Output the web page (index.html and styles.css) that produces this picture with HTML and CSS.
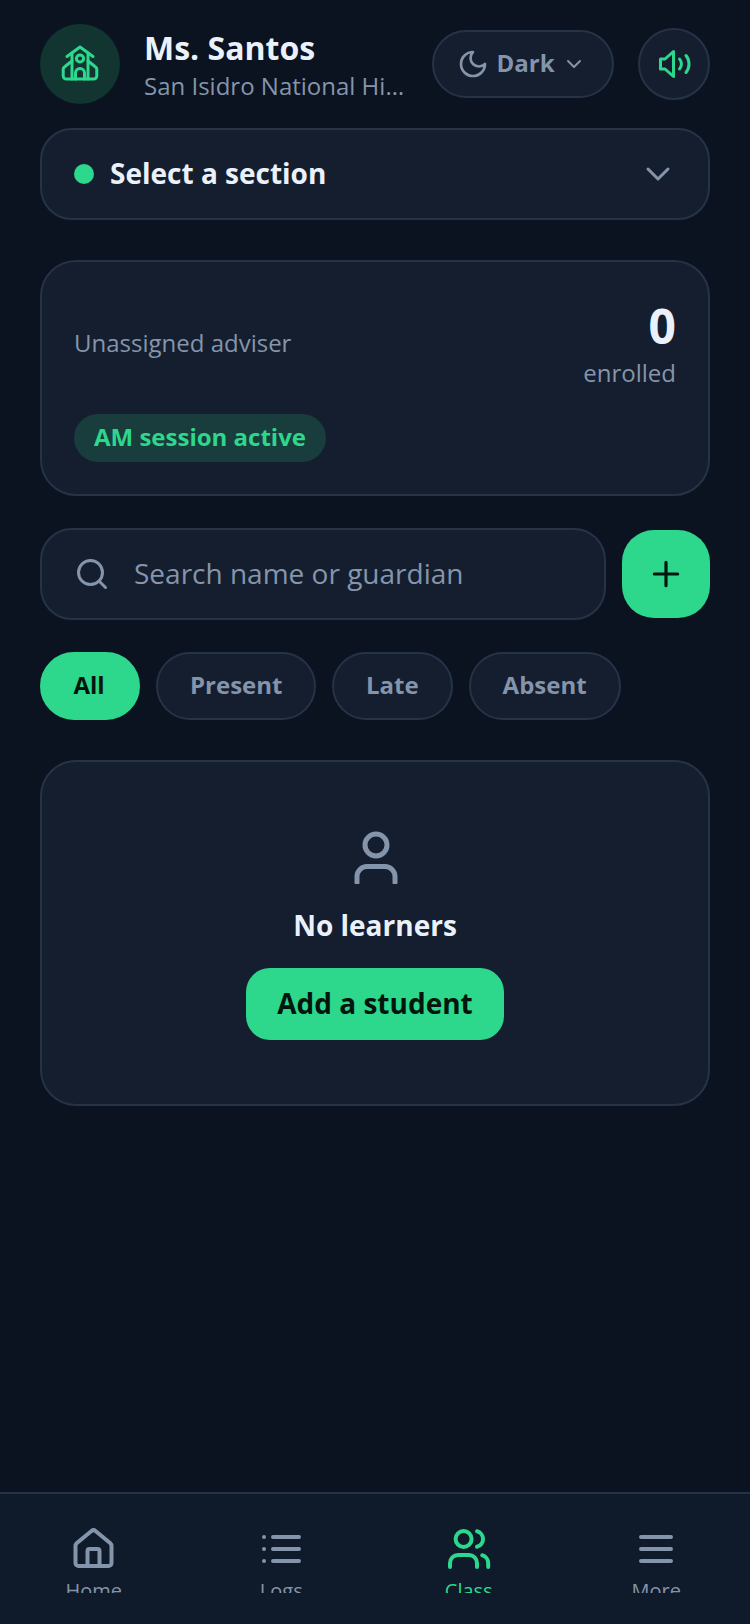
FILE: index.html
```html
<!DOCTYPE html>
<html lang="en">
<head>
<meta charset="utf-8">
<title>Class</title>
<link rel="stylesheet" href="styles.css">
</head>
<body>
<main class="page">
  <header class="top">
    <div class="avatar">
      <svg class="avatar-icon" viewBox="0 0 80 80" fill="none" stroke="currentColor" stroke-width="3" stroke-linecap="round" stroke-linejoin="round">
        <path d="M27 32.500 40 23l13 9.500"/>
        <path d="M32 29v26M48 29v26"/>
        <circle cx="40" cy="34.500" r="3.600"/>
        <path d="M35.500 55v-6a4.500 4.500 0 0 1 9 0v6"/>
        <path d="M32 37l-7.600 6a3 3 0 0 0-1.200 2.400V52a3 3 0 0 0 3 3h27.600a3 3 0 0 0 3-3v-6.600a3 3 0 0 0-1.200-2.400L48 37"/>
      </svg>
    </div>
    <div class="who">
      <div class="who-name">Ms. Santos</div>
      <div class="who-school">San Isidro National High School</div>
    </div>
    <button class="theme">
      <svg class="theme-moon" viewBox="0 0 24 24" fill="none" stroke="currentColor" stroke-width="2" stroke-linecap="round" stroke-linejoin="round"><path d="M12 3a6 6 0 0 0 9 9 9 9 0 1 1-9-9Z"/></svg>
      <span class="theme-text">Dark</span>
      <svg class="theme-chev" viewBox="0 0 24 24" fill="none" stroke="currentColor" stroke-width="2" stroke-linecap="round" stroke-linejoin="round"><path d="m6 9 6 6 6-6"/></svg>
    </button>
    <button class="sound">
      <svg class="sound-icon" viewBox="0 0 36 32" fill="none" stroke="currentColor" stroke-width="3" stroke-linecap="round" stroke-linejoin="round">
        <path d="M4.500 11h4.500l8.500-7.500v25L9 21H4.500z"/>
        <path d="M23.500 11a7.500 7.500 0 0 1 0 10"/>
        <path d="M30 7.500a13.500 13.500 0 0 1 0 17"/>
      </svg>
    </button>
  </header>

  <button class="select">
    <span class="dot"></span>
    <span class="select-text">Select a section</span>
    <svg class="select-chev" viewBox="0 0 24 24" fill="none" stroke="currentColor" stroke-width="1.800" stroke-linecap="round" stroke-linejoin="round"><path d="m6 9 6 6 6-6"/></svg>
  </button>

  <section class="card summary">
    <div class="summary-row">
      <div class="adviser">Unassigned adviser</div>
      <div class="count">
        <div class="count-num">0</div>
        <div class="count-label">enrolled</div>
      </div>
    </div>
    <div class="badge">AM session active</div>
  </section>

  <div class="search-row">
    <label class="search">
      <svg class="search-icon" viewBox="0 0 24 24" fill="none" stroke="currentColor" stroke-width="2" stroke-linecap="round" stroke-linejoin="round"><circle cx="11" cy="11" r="8"/><path d="m21 21-4.300-4.300"/></svg>
      <span class="search-text">Search name or guardian</span>
    </label>
    <button class="add">
      <svg class="add-icon" viewBox="0 0 24 24" fill="none" stroke="currentColor" stroke-width="1.900" stroke-linecap="round"><path d="M5 12h14M12 5v14"/></svg>
    </button>
  </div>

  <div class="chips">
    <button class="chip chip-on">All</button>
    <button class="chip">Present</button>
    <button class="chip">Late</button>
    <button class="chip">Absent</button>
  </div>

  <section class="card empty">
    <svg class="empty-icon" viewBox="0 0 48 56" fill="none" stroke="currentColor" stroke-width="5" stroke-linecap="round" stroke-linejoin="round">
      <circle cx="24" cy="17" r="11"/>
      <path d="M5 54.500v-6a10 10 0 0 1 10-10h18a10 10 0 0 1 10 10v6"/>
    </svg>
    <div class="empty-title">No learners</div>
    <button class="empty-btn">Add a student</button>
  </section>
</main>

<nav class="nav">
  <div class="nav-item">
    <svg class="nav-icon" viewBox="0 0 24 24" fill="none" stroke="currentColor" stroke-width="2" stroke-linecap="round" stroke-linejoin="round"><path d="M3 10.500a2 2 0 0 1 .7-1.500L11 3a1.500 1.500 0 0 1 2 0l7.300 6a2 2 0 0 1 .7 1.500V19a1.500 1.500 0 0 1-1.500 1.500h-15A1.500 1.500 0 0 1 3 19z" transform="translate(-.25 0)"/><path d="M8.750 20.500V13a1 1 0 0 1 1-1h4a1 1 0 0 1 1 1v7.500"/></svg>
    <span class="nav-label">Home</span>
  </div>
  <div class="nav-item">
    <svg class="nav-icon" viewBox="0 0 24 24" fill="none" stroke="currentColor" stroke-width="2" stroke-linecap="round" stroke-linejoin="round"><path d="M8 6h13M8 12h13M8 18h13M3.500 6h.01M3.500 12h.01M3.500 18h.01"/></svg>
    <span class="nav-label">Logs</span>
  </div>
  <div class="nav-item nav-on">
    <svg class="nav-icon" viewBox="0 0 24 24" fill="none" stroke="currentColor" stroke-width="2" stroke-linecap="round" stroke-linejoin="round"><circle cx="9.300" cy="7" r="4"/><path d="M2.500 21v-2a4 4 0 0 1 4-4h5.500a4 4 0 0 1 4 4v2"/><path d="M16 3.130a4 4 0 0 1 0 7.750"/><path d="M21.600 21v-2a4 4 0 0 0-3-3.870"/></svg>
    <span class="nav-label">Class</span>
  </div>
  <div class="nav-item">
    <svg class="nav-icon" viewBox="0 0 24 24" fill="none" stroke="currentColor" stroke-width="2" stroke-linecap="round" stroke-linejoin="round"><path d="M4.500 6h15M4.500 12h15M4.500 18h15"/></svg>
    <span class="nav-label">More</span>
  </div>
</nav>
</body>
</html>
```
FILE: styles.css
```css
* { box-sizing: border-box; }
html, body { margin: 0; padding: 0; }
body {
  width: 750px;
  height: 1624px;
  overflow: hidden;
  display: flex;
  flex-direction: column;
  background: #0b1220;
  color: #eaf1fb;
  font-family: "Open Sans", "Liberation Sans", sans-serif;
}
button { font-family: inherit; padding: 0; margin: 0; cursor: pointer; }
.page {
  flex: 1;
  min-height: 0;
  padding: 24px 40px 0;
  display: flex;
  flex-direction: column;
}
.top { display: flex; align-items: center; height: 80px; }
.avatar {
  width: 80px; height: 80px; border-radius: 50%;
  background: #123531; color: #2dd78c; flex: none;
}
.avatar-icon { display: block; width: 80px; height: 80px; }
.who { flex: 1; min-width: 0; margin: 0 24px; padding-top: 2px; }
.who-name { font-size: 32px; line-height: 42px; font-weight: 700; color: #eaf1fb; }
.who-school {
  font-size: 24px; line-height: 34px; color: #8595ab;
  white-space: nowrap; overflow: hidden; text-overflow: ellipsis;
}
.theme {
  flex: none; width: 182px; height: 68px; padding-right: 3px;
  border: 2px solid #263347; border-radius: 34px; background: #141e2f;
  color: #8494ab; display: flex; align-items: center; justify-content: center; gap: 7px;
  font-size: 24px; font-weight: 700;
}
.theme-text { padding-bottom: 3px; }
.theme-moon { width: 32px; height: 32px; }
.theme-chev { width: 24px; height: 24px; }
.sound {
  flex: none; width: 72px; height: 72px; margin-left: 24px;
  border: 2px solid #263347; border-radius: 50%; background: #141e2f;
  color: #2dd78c; display: flex; align-items: center; justify-content: center;
}
.sound-icon { width: 36px; height: 32px; }
.select {
  margin-top: 24px; height: 92px; width: 100%;
  border: 2px solid #263347; border-radius: 32px; background: #141e2f;
  display: flex; align-items: center; padding: 0 30px 0 32px; color: #eaf1fb;
}
.dot { width: 20px; height: 20px; border-radius: 50%; background: #2dd78c; flex: none; }
.select-text { margin-left: 16px; padding-bottom: 2px; font-size: 28px; font-weight: 700; flex: 1; text-align: left; }
.select-chev { width: 40px; height: 40px; color: #8494ab; }
.card { border: 2px solid #263347; border-radius: 36px; background: #141e2f; }
.summary { margin-top: 40px; height: 236px; padding: 32px; display: flex; flex-direction: column; justify-content: space-between; }
.summary-row { display: flex; align-items: center; justify-content: space-between; }
.adviser { font-size: 24px; line-height: 34px; color: #8595ab; }
.count { text-align: right; margin-bottom: 4px; }
.count-num { font-size: 48px; line-height: 64px; font-weight: 700; color: #eaf1fb; }
.count-label { font-size: 24px; line-height: 30px; color: #8595ab; }
.badge {
  align-self: flex-start; height: 48px; line-height: 46px; padding: 0 20px;
  border-radius: 24px; background: #193c3c; color: #2dd78c;
  font-size: 24px; font-weight: 700;
}
.search-row { margin-top: 32px; display: flex; align-items: center; gap: 16px; }
.search {
  flex: 1; height: 92px; border: 2px solid #263347; border-radius: 32px; background: #141e2f;
  display: flex; align-items: center; padding: 0 32px; gap: 24px;
}
.search-icon { width: 36px; height: 36px; color: #8494ab; flex: none; }
.search-text { font-size: 28px; color: #8595ab; padding-bottom: 2px; }
.add {
  flex: none; width: 88px; height: 88px; border: 0; border-radius: 32px;
  background: #2dd78c; color: #03160d; display: flex; align-items: center; justify-content: center;
}
.add-icon { width: 40px; height: 40px; }
.chips { margin-top: 32px; display: flex; gap: 16px; }
.chip {
  height: 68px; padding: 0 32px 3px; border: 2px solid #263347; border-radius: 34px;
  background: #141e2f; color: #8494ab; font-size: 24px; font-weight: 700;
}
.chip:nth-child(2) { margin-right: -.5px; }
.chip-on { width: 100px; background: #2dd78c; border-color: #2dd78c; color: #03160d; padding-left: 0; padding-right: 2px; }
.empty {
  margin-top: 40px; height: 346px;
  display: flex; flex-direction: column; align-items: center; padding-top: 66px;
}
.empty-icon { width: 48px; height: 56px; margin-left: 2px; color: #8494ab; }
.empty-title { margin-top: 21px; font-size: 28px; line-height: 40px; font-weight: 700; color: #eaf1fb; }
.empty-btn {
  margin-top: 23px; width: 258px; height: 72px; padding-bottom: 2px; border: 0; border-radius: 24px;
  background: #2dd78c; color: #03160d; font-size: 28px; font-weight: 700;
}
.nav {
  flex: none; height: 132px; border-top: 2px solid #263347; background: #0f1a2a;
  display: grid; grid-template-columns: repeat(4, 1fr); padding-top: 31px;
}
.nav-item { display: flex; flex-direction: column; align-items: center; height: 68px; overflow: hidden; color: #8494ab; }
.nav-on { color: #2dd78c; }
.nav-icon { width: 48px; height: 48px; flex: none; }
.nav-label { margin-top: 3px; font-size: 20px; line-height: 30px; }
```
